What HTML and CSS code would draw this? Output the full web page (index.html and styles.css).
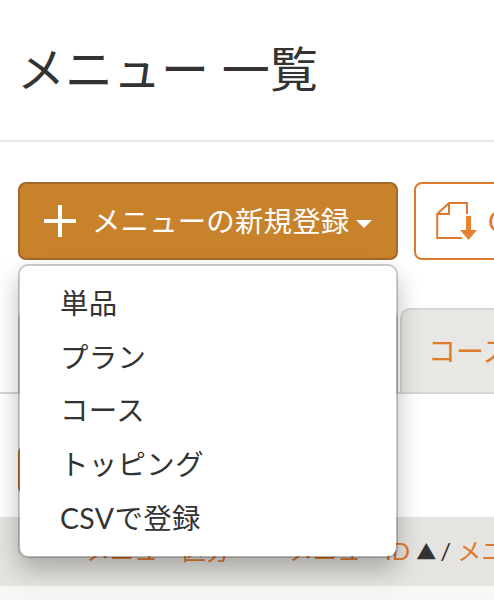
FILE: index.html
```html
<!DOCTYPE html>
<html lang="ja">
<head>
<meta charset="utf-8">
<title>メニュー 一覧</title>
<link rel="stylesheet" href="styles.css">
</head>
<body>
<header class="page-head"><h1 class="title">メニュー 一覧</h1></header>
<main class="content">
  <div class="actions">
    <div class="dropdown">
      <button class="btn-primary" type="button">
        <svg class="plus" width="34" height="34" viewBox="0 0 34 34"><path d="M17 1v32M1 17h32" fill="none" stroke="#fff" stroke-width="4"/></svg>
        <span class="btn-label">メニューの新規登録</span>
        <span class="caret"></span>
      </button>
      <ul class="menu">
        <li>単品</li>
        <li>プラン</li>
        <li>コース</li>
        <li>トッピング</li>
        <li>CSVで登録</li>
      </ul>
    </div>
    <button class="btn-outline" type="button">
      <svg class="csv-icon" width="42" height="40" viewBox="0 0 42 40"><path d="M31 13V2H13L1.2 13V37H26" fill="none" stroke="#e07a2f" stroke-width="2"/><path d="M13 2V13H1.2" fill="none" stroke="#e07a2f" stroke-width="2"/><path d="M30 15h5v14h6L32.500 39 24 29h6z" fill="#e8822f"/></svg>
      <span class="btn-outline-text">CSV</span>
    </button>
  </div>
  <nav class="tabs">
    <div class="tab tab-active">単品</div>
    <div class="tab">コース</div>
  </nav>
  <div class="sub-action"><button class="btn-small" type="button">並替</button></div>
  <div class="sort-bar"><span class="sort-link sort-first">メニュー区分</span><span class="sort-link">メニューID</span> <span class="sort-mark">▲</span> / <span class="sort-link">メニュー名</span></div>
  <div class="row-alt"></div>
</main>
</body>
</html>
```
FILE: styles.css
```css
* { box-sizing: border-box; }
html, body { margin: 0; padding: 0; background: #fff; overflow: hidden; height: 100%; }
body { font-family: "Lato", "Noto Sans CJK JP", sans-serif; color: #333; }
.page-head { height: 142px; border-bottom: 2px solid #e7e7e7; padding: 31px 0 0 17px; }
.title { margin: 0; font-family: "Noto Sans CJK JP", sans-serif; font-weight: 400; font-size: 48px; line-height: 70px; white-space: nowrap; word-spacing: 2px; }
.content { width: 100%; overflow: hidden; }
.actions { display: flex; gap: 16px; padding: 40px 0 0 18px; width: 700px; }
.dropdown { position: relative; width: 380px; flex: none; }
.btn-primary { display: flex; align-items: center; width: 380px; height: 78px; background: #c9822c; border: 2px solid #a3692a; border-radius: 8px; padding: 0 0 0 23px; color: #fff; font-family: "Noto Sans CJK JP", sans-serif; font-size: 28.400px; }
.plus { flex: none; }
.btn-label { margin: 0 0 4px 15px; white-space: nowrap; letter-spacing: .2px; }
.caret { width: 0; height: 0; margin-left: 7px; margin-top: 6px; border-left: 8px solid transparent; border-right: 8px solid transparent; border-top: 8px solid #fff; }
.menu { position: absolute; z-index: 5; left: 0; top: 82px; width: 380px; height: 294px; margin: 0; padding: 11px 0 0 40px; list-style: none; background: #fff; background-clip: padding-box; border: 2px solid rgba(0,0,0,.2); border-radius: 10px; box-shadow: 0 12px 24px rgba(0,0,0,.26); font-size: 28.400px; letter-spacing: .4px; color: #333; }
.menu li { height: 53.700px; line-height: 53.700px; white-space: nowrap; }
.btn-outline { display: flex; align-items: center; flex: none; width: 260px; height: 78px; background: #fff; border: 2px solid #e07a2f; border-radius: 8px; padding: 0 0 0 20px; color: #e07a2f; font-family: "Lato", sans-serif; font-size: 28px; }
.btn-outline-text { margin-left: 10px; }
.tabs { display: flex; gap: 2px; height: 86px; margin-top: 48px; padding-left: 18px; border-bottom: 2px solid #d6d6d4; overflow: hidden; }
.tab { flex: none; width: 380px; height: 84px; border: 2px solid #d6d6d4; border-bottom: 0; border-radius: 10px 10px 0 0; background: #e8e7e3; color: #e07a2f; font-family: "Noto Sans CJK JP", sans-serif; font-size: 28px; padding: 20px 0 0 26px; white-space: nowrap; }
.tab-active { background: #fff; }
.sub-action { padding: 51px 0 0 18px; height: 123px; }
.btn-small { display: block; width: 120px; height: 50px; background: #c9822c; border: 0; border-radius: 8px; color: #fff; font-size: 24px; font-family: "Noto Sans CJK JP", sans-serif; }
.sort-bar { height: 69px; background: #e5e4e0; padding: 15px 0 0 86px; font-size: 24px; white-space: nowrap; overflow: hidden; color: #333; }
.sort-link { color: #e07a2f; }
.sort-first { margin-right: 59px; }
.sort-mark { font-size: 20px; margin-right: -2px; }
.row-alt { height: 14px; background: #f6f6f4; }
```
